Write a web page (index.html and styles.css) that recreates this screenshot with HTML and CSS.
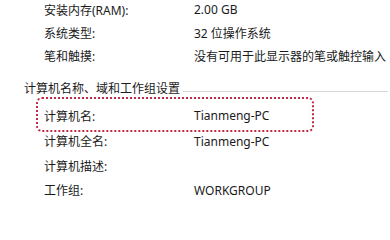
FILE: index.html
```html
<!DOCTYPE html>
<html lang="zh-CN">
<head>
<meta charset="utf-8">
<title>系统</title>
<link rel="stylesheet" href="styles.css">
</head>
<body>
<div class="page">
  <div class="group sys">
    <div class="row"><span class="label">安装内存(RAM):</span><span class="value">2.00 GB</span></div>
    <div class="row"><span class="label">系统类型:</span><span class="value">32 位操作系统</span></div>
    <div class="row"><span class="label">笔和触摸:</span><span class="value">没有可用于此显示器的笔或触控输入</span></div>
  </div>
  <div class="section">
    <span class="section-title">计算机名称、域和工作组设置</span>
    <span class="rule"></span>
  </div>
  <div class="group names">
    <div class="row highlight"><span class="label">计算机名:</span><span class="value">Tianmeng-PC</span></div>
    <div class="row"><span class="label">计算机全名:</span><span class="value">Tianmeng-PC</span></div>
    <div class="row"><span class="label">计算机描述:</span><span class="value"></span></div>
    <div class="row"><span class="label">工作组:</span><span class="value">WORKGROUP</span></div>
  </div>
</div>
</body>
</html>
```
FILE: styles.css
```css
html, body {
  margin: 0;
  padding: 0;
  background: #ffffff;
}
body {
  width: 390px;
  height: 206px;
  overflow: hidden;
  font-family: "Noto Sans", "Noto Sans CJK SC", sans-serif;
  font-size: 12px;
  color: #1a1a1a;
}
.page {
  display: flex;
  flex-direction: column;
}
.sys {
  margin-top: -2px;
}
.row {
  display: grid;
  grid-template-columns: 150px 1fr;
  align-items: center;
  height: 23px;
  padding-left: 44px;
  white-space: nowrap;
}
.names .row {
  height: 24.5px;
}
.section {
  display: flex;
  align-items: center;
  gap: 3px;
  height: 24px;
  margin-top: 9px;
  padding-left: 24px;
}
.rule {
  flex: 1;
  height: 0;
  border-top: 1px solid #d6d6d6;
  margin-top: 7px;
  margin-right: 2px;
}
.names .row.highlight {
  box-sizing: border-box;
  width: 278px;
  height: 35px;
  margin-left: 36px;
  margin-top: -3px;
  margin-bottom: -3px;
  padding-left: 6px;
  padding-top: 2px;
  grid-template-columns: 150px 1fr;
  border: 2px dotted #c02a45;
  border-radius: 6px;
}
```
